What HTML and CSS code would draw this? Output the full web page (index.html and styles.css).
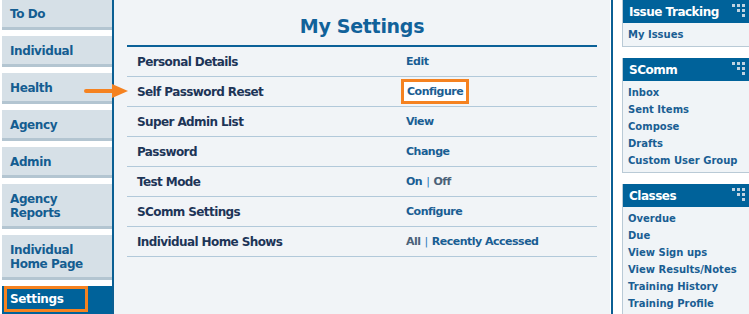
FILE: index.html
```html
<!DOCTYPE html>
<html lang="en">
<head>
    <meta charset="UTF-8">
    <title>My Settings</title>
    <link rel="stylesheet" href="styles.css">
</head>
<body>
    <div class="page">
        <!-- Left navigation tabs -->
        <div class="sidebar">
            <a class="tab first">To Do</a>
            <a class="tab">Individual</a>
            <a class="tab">Health</a>
            <a class="tab">Agency</a>
            <a class="tab">Admin</a>
            <a class="tab">Agency<br>Reports</a>
            <a class="tab">Individual<br>Home Page</a>
            <a class="tab active"><span class="callout">Settings</span></a>
        </div>

        <!-- Settings table -->
        <div class="main">
            <h1>My Settings</h1>
            <table class="settings">
                <tr><td class="label">Personal Details</td><td><a>Edit</a></td></tr>
                <tr><td class="label">Self Password Reset</td><td><a class="callout">Configure</a></td></tr>
                <tr><td class="label">Super Admin List</td><td><a>View</a></td></tr>
                <tr><td class="label">Password</td><td><a>Change</a></td></tr>
                <tr><td class="label">Test Mode</td><td><a>On</a><span class="sep">|</span><span class="off">Off</span></td></tr>
                <tr><td class="label">SComm Settings</td><td><a>Configure</a></td></tr>
                <tr><td class="label">Individual Home Shows</td><td><span class="off">All</span><span class="sep">|</span><a>Recently Accessed</a></td></tr>
            </table>
        </div>

        <!-- Right side panels -->
        <div class="side">
            <div class="panel">
                <div class="panel-head">Issue Tracking <span class="grip"></span></div>
                <ul><li><a>My Issues</a></li></ul>
            </div>
            <div class="panel">
                <div class="panel-head">SComm <span class="grip"></span></div>
                <ul>
                    <li><a>Inbox</a></li>
                    <li><a>Sent Items</a></li>
                    <li><a>Compose</a></li>
                    <li><a>Drafts</a></li>
                    <li><a>Custom User Group</a></li>
                </ul>
            </div>
            <div class="panel">
                <div class="panel-head">Classes <span class="grip"></span></div>
                <ul>
                    <li><a>Overdue</a></li>
                    <li><a>Due</a></li>
                    <li><a>View Sign ups</a></li>
                    <li><a>View Results/Notes</a></li>
                    <li><a>Training History</a></li>
                    <li><a>Training Profile</a></li>
                </ul>
            </div>
        </div>
    </div>

    <!-- Annotation arrow -->
    <svg class="arrow" width="46" height="16" viewBox="0 0 46 16">
        <path d="M2 8 H30" stroke="#f58220" stroke-width="4" stroke-linecap="round"/>
        <path d="M28 1 L44 8 L28 15 Z" fill="#f58220"/>
    </svg>
</body>
</html>
```

FILE: styles.css
```css
body {
    margin: 0;
    font-family: "DejaVu Sans", Verdana, sans-serif;
    font-weight: bold;
    background: #fff;
}

a {
    color: #1a5e93;
    text-decoration: none;
}

.page {
    display: flex;
    height: 314px;
    overflow: hidden;
}

/* Left tabs */
.sidebar {
    width: 110px;
    padding-left: 2px;
    border-right: 2px solid #0b5f93;
    display: flex;
    flex-direction: column;
    gap: 6px;
}

.tab {
    display: block;
    background: #d6e0e7;
    border-bottom: 3px solid #b3c5d1;
    padding: 8px 0 6px 8px;
    font-size: 12px;
    line-height: 14px;
    letter-spacing: -0.4px;
    color: #145d91;
}

.tab.first {
    padding-top: 7px;
}

.tab.active {
    background: #00629a;
    border-bottom: none;
    color: #fff;
    padding: 0 0 4px 2px;
    flex: 1;
}

.tab.active .callout {
    display: inline-block;
    border: 3px solid #f58220;
    padding: 3px 22px 3px 3px;
}

/* Main settings area */
.main {
    flex: 1;
    background: #f1f4f7;
    padding: 0 13px;
}

h1 {
    margin: 0;
    padding: 16px 0 9px;
    text-align: center;
    font-size: 19px;
    line-height: 20px;
    letter-spacing: -0.3px;
    color: #11629a;
}

.settings {
    width: 100%;
    border-collapse: collapse;
    border-top: 2px solid #0b6198;
}

.settings td {
    height: 29px;
    padding: 0;
    border-bottom: 1px solid #b2c9da;
    font-size: 11px;
    letter-spacing: -0.5px;
    color: #1a5e93;
}

.settings td.label {
    width: 269px;
    padding-left: 10px;
    font-size: 12px;
    letter-spacing: -0.6px;
    color: #1d3557;
}

.settings .callout {
    display: inline-block;
    border: 3px solid #f58220;
    padding: 3px 3px;
    margin-left: -5px;
    background: #fff;
}

.sep {
    color: #2b7bc0;
    font-weight: normal;
    margin: 0 4px;
}

.off {
    color: #4a6178;
}

/* Right panels */
.side {
    width: 127px;
    border-left: 2px solid #0b5f93;
    padding: 0 0 0 9px;
    margin-left: 1px;
}

.panel {
    border: 1px solid #b9cad6;
    border-right: none;
    border-top: none;
    background: #f0f4f7;
    margin-bottom: 11px;
}

.panel-head {
    position: relative;
    background: #00629a;
    color: #fff;
    font-size: 12px;
    line-height: 14px;
    letter-spacing: -0.5px;
    padding: 5px 4px 4px 6px;
}

.grip {
    position: absolute;
    right: 4px;
    top: 4px;
    width: 13px;
    height: 13px;
    background:
        linear-gradient(#c0d3e1, #c0d3e1) 0 0 / 3px 3px no-repeat,
        linear-gradient(#c0d3e1, #c0d3e1) 5px 0 / 3px 3px no-repeat,
        linear-gradient(#c0d3e1, #c0d3e1) 10px 0 / 3px 3px no-repeat,
        linear-gradient(#c0d3e1, #c0d3e1) 5px 5px / 3px 3px no-repeat,
        linear-gradient(#c0d3e1, #c0d3e1) 10px 5px / 3px 3px no-repeat,
        linear-gradient(#c0d3e1, #c0d3e1) 10px 10px / 3px 3px no-repeat;
}

.panel ul {
    list-style: none;
    margin: 0;
    padding: 3px 0 3px 5px;
}

.panel li {
    font-size: 10px;
    line-height: 17px;
    white-space: nowrap;
}

/* Annotation arrow pointing at the highlighted row */
.arrow {
    position: absolute;
    left: 84px;
    top: 83px;
}
```
